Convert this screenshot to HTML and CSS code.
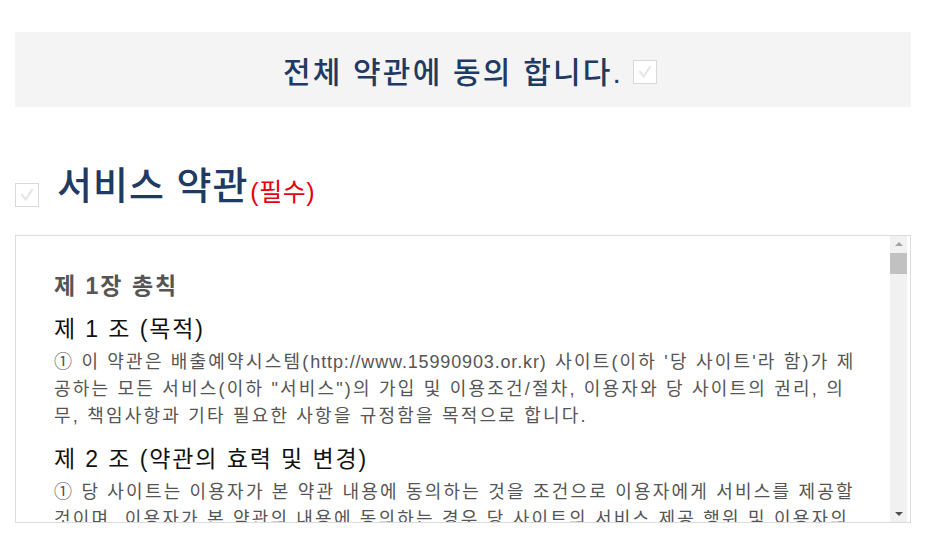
FILE: index.html
```html
<!DOCTYPE html>
<html lang="ko">
<head>
<meta charset="utf-8">
<title>약관 동의</title>
<link rel="stylesheet" href="styles.css">
</head>
<body>
<div class="wrap">
  <div class="agree-all">
    <span class="agree-all-text">전체 약관에 동의 합니다.</span>
    <span class="chk chk-all"><svg viewBox="0 0 24 24" width="24" height="24"><path d="M6.5 11.5 L10.5 17 L17.5 6.5" fill="none" stroke="#e6e6e6" stroke-width="2.4" stroke-linecap="round" stroke-linejoin="round"/></svg></span>
  </div>

  <div class="section-title">
    <span class="chk chk-sec"><svg viewBox="0 0 24 24" width="24" height="24"><path d="M6.5 11.5 L10.5 17 L17.5 6.5" fill="none" stroke="#e6e6e6" stroke-width="2.4" stroke-linecap="round" stroke-linejoin="round"/></svg></span>
    <h2 class="title">서비스 약관</h2>
    <span class="req">(필수)</span>
  </div>

  <div class="terms">
    <div class="terms-body">
      <h3 class="chapter">제 1장 총칙</h3>
      <h4 class="article">제 1 조 (목적)</h4>
      <p class="para">① 이 약관은 배출예약시스템(<span class="latin">http://www.15990903.or.kr</span>) 사이트(이하 '당 사이트'라 함)가 제공하는 모든 서비스(이하 "서비스")의 가입 및 이용조건/절차, 이용자와 당 사이트의 권리, 의무, 책임사항과 기타 필요한 사항을 규정함을 목적으로 합니다.</p>
      <h4 class="article">제 2 조 (약관의 효력 및 변경)</h4>
      <p class="para">① 당 사이트는 이용자가 본 약관 내용에 동의하는 것을 조건으로 이용자에게 서비스를 제공할 것이며, 이용자가 본 약관의 내용에 동의하는 경우 당 사이트의 서비스 제공 행위 및 이용자의 서비스 사용 행위에는 본 약관이 우선적으로 적용됩니다.</p>
    </div>
    <div class="scrollbar">
      <span class="sb-arrow sb-up"></span>
      <span class="sb-thumb"></span>
      <span class="sb-space"></span>
      <span class="sb-arrow sb-down"></span>
    </div>
  </div>
</div>
</body>
</html>
```

FILE: styles.css
```css
* { box-sizing: border-box; }
html, body { margin: 0; padding: 0; background: #fff; }
body {
  font-family: "Liberation Sans", "Noto Sans CJK KR", sans-serif;
  color: #555;
}
.wrap {
  width: 896px;
  margin-left: 15px;
  padding-top: 32px;
}
.agree-all {
  height: 75px;
  background: #f4f4f4;
  display: flex;
  align-items: center;
  justify-content: center;
  gap: 10px;
  padding-left: 14px;
}
.agree-all-text {
  font-size: 30px;
  color: #1f3a63;
  font-weight: 500;
  letter-spacing: 2.2px;
}
.chk {
  display: inline-flex;
  width: 24px;
  height: 24px;
  border: 1px solid #d9d9d9;
  background: #fff;
  align-items: center;
  justify-content: center;
}
.chk svg { width: 22px; height: 22px; }
.chk-all { margin-top: 4px; }
.section-title {
  display: flex;
  align-items: flex-end;
  margin-top: 55px;
  height: 48px;
}
.chk-sec { margin-bottom: 3px; }
.title {
  margin: 0 0 0 18px;
  font-size: 38px;
  font-weight: 500;
  color: #1f3a63;
  line-height: 48px;
  letter-spacing: 1px;
}
.req {
  margin-left: 2px;
  font-size: 25px;
  color: #e60012;
  line-height: 30px;
  padding-bottom: 3px;
  letter-spacing: 0.5px;
}
.terms {
  margin-top: 25px;
  height: 288px;
  border: 1px solid #dcdcdc;
  display: flex;
  overflow: hidden;
}
.terms-body {
  flex: 1;
  padding: 36px 27px 0 38px;
  overflow: hidden;
}
.chapter {
  margin: 0;
  font-size: 23px;
  font-weight: bold;
  color: #555;
  line-height: 28px;
  letter-spacing: 2px;
}
.article {
  margin: 14px 0 0 0;
  font-size: 23px;
  font-weight: normal;
  color: #111;
  line-height: 30px;
  letter-spacing: 1.9px;
}
.para {
  margin: 5px 0 0 0;
  font-size: 18px;
  line-height: 27px;
  color: #555;
  letter-spacing: 2.2px;
}
.latin { letter-spacing: 0.85px; }
.scrollbar {
  width: 17px;
  margin-right: 3px;
  background: #f1f1f1;
  display: flex;
  flex-direction: column;
  align-items: center;
}
.sb-arrow {
  width: 0;
  height: 0;
  border-left: 4px solid transparent;
  border-right: 4px solid transparent;
  margin: 6px 0;
}
.sb-up { border-bottom: 4px solid #a3a3a3; }
.sb-down { border-top: 4px solid #505050; }
.sb-thumb {
  width: 17px;
  height: 21px;
  background: #c1c1c1;
  margin-top: 1px;
}
.sb-space { flex: 1; }
```
